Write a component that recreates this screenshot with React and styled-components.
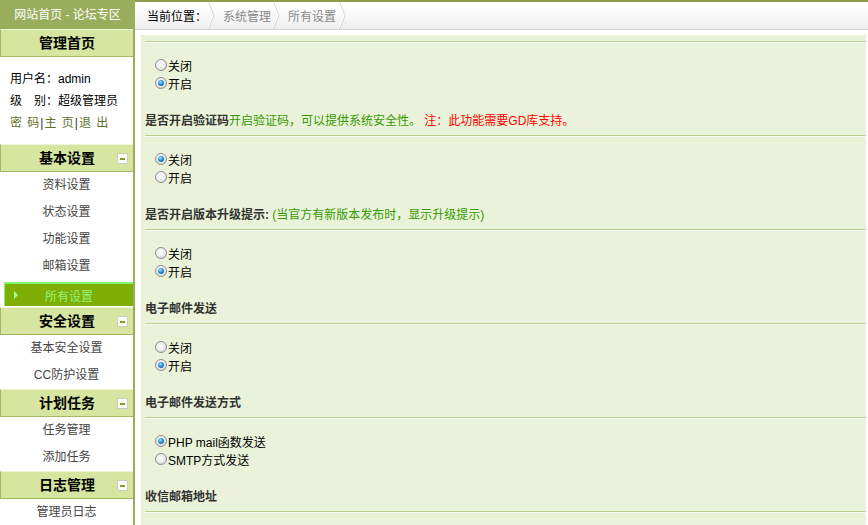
import React from "react";
import styled, { createGlobalStyle, css } from "styled-components";

const GlobalStyle = createGlobalStyle`
  html, body {
    margin: 0;
    padding: 0;
    height: 525px;
    overflow: hidden;
    background: #fff;
    font-family: "Liberation Sans", "Noto Sans CJK SC", sans-serif;
    font-size: 12px;
    color: #000;
  }
  * { box-sizing: border-box; }
`;

const olive = "#9aad5c";
const barBorder = "#a3b862";

const Page = styled.div`
  display: flex;
  width: 868px;
  height: 525px;
  overflow: hidden;
`;

/* ---------- left menu ---------- */
const Sidebar = styled.aside`
  width: 135px;
  flex: none;
  display: flex;
  flex-direction: column;
`;

const SiteTitle = styled.div`
  height: 29px;
  padding-top: 2px;
  line-height: 27px;
  background: ${olive};
  color: #fff;
  text-align: center;
  font-size: 12px;
`;

const MenuBody = styled.div`
  flex: 1;
  border-right: 2px solid ${olive};
  display: flex;
  flex-direction: column;
`;

const GroupBar = styled.div`
  position: relative;
  height: 28px;
  line-height: 26px;
  border-top: 1px solid #eef5d6;
  border-bottom: 1px solid ${barBorder};
  border-left: 1px solid ${barBorder};
  background: #d6e59f;
  text-align: center;
  font-weight: bold;
  font-size: 14px;
  color: #000;
  display: flex;
  align-items: center;
  justify-content: center;
`;

const Collapse = styled.span`
  position: absolute;
  right: 5px;
  top: 8px;
  width: 11px;
  height: 11px;
  background: #fbfbf6;
  border: 1px solid #c9cfb8;
  display: flex;
  align-items: center;
  justify-content: center;
  &::before {
    content: "";
    width: 5px;
    height: 2px;
    background: #849a35;
  }
`;

const UserInfo = styled.div`
  padding: 11px 0 10px 10px;
  line-height: 22px;
  color: #000;
`;

const UserLinks = styled.div`
  letter-spacing: 1px;
  color: #333;
  span { color: #5f6e2c; }
`;

const MenuItem = styled.div`
  height: 27px;
  line-height: 27px;
  text-align: center;
  color: #454545;
  font-size: 12px;
`;

const ActiveItem = styled.div`
  height: 27px;
  padding: 2px 0 1px 4px;
`;

const ActiveInner = styled.div`
  height: 100%;
  display: flex;
  align-items: center;
  border-top: 2px solid #84f56e;
  border-left: 1px solid #84f56e;
  background: #7fae04;
  color: #93f27a;
  padding-left: 9px;
  &::before {
    content: "";
    width: 0;
    height: 0;
    border-top: 4px solid transparent;
    border-bottom: 4px solid transparent;
    border-left: 4px solid #a6ff8e;
  }
  span {
    flex: 1;
    text-align: center;
    margin-right: 13px;
  }
`;

/* ---------- main area ---------- */
const Main = styled.main`
  flex: 1;
  display: flex;
  flex-direction: column;
  border-top: 2px solid #8c9f48;
  min-width: 0;
`;

const Crumbs = styled.nav`
  height: 28px;
  display: flex;
  align-items: center;
  padding-left: 12px;
  background: linear-gradient(#ffffff, #fbfbfb 40%, #ededed);
  border-bottom: 1px solid #d3d3d3;
  font-size: 12px;
`;

const CrumbLabel = styled.span`
  color: #000;
  width: 61px;
`;

const CrumbText = styled.span`
  color: #888;
  margin: 0 ${(p) => p.$after}px 0 8px;
`;

const Chevron = () => (
  <svg width="7" height="27" viewBox="0 0 7 27" style={{ flex: "none" }}>
    <polyline points="0.5,0 6,13.5 0.5,27" fill="none" stroke="#cfcfcf" strokeWidth="1" />
    <polyline points="-0.5,0 5,13.5 -0.5,27" fill="none" stroke="#ffffff" strokeWidth="1" />
  </svg>
);

const Frame = styled.div`
  flex: 1;
  padding: 5px 2px 0 6px;
  background: #fff;
  display: flex;
`;

const Panel = styled.section`
  flex: 1;
  background: #eaf3d9;
  padding: 6px 0 0 4px;
`;

const Rule = styled.div`
  height: 2px;
  border-top: 1px solid #bbcf93;
  border-bottom: 1px solid #fafdf3;
`;

const Options = styled.div`
  padding: 13px 0 16px 10px;
`;

const OptionRow = styled.label`
  display: flex;
  align-items: center;
  height: 18px;
  color: #000;
`;

const RadioMark = styled.span`
  width: 12px;
  height: 12px;
  margin-right: 1px;
  border-radius: 50%;
  border: 1px solid #8e8e8e;
  background: radial-gradient(circle at 45% 40%, #ffffff 0%, #ececec 50%, #c4c4c4 100%);
  display: inline-flex;
  align-items: center;
  justify-content: center;
  ${(p) =>
    p.$on &&
    css`
      &::after {
        content: "";
        width: 6px;
        height: 6px;
        border-radius: 50%;
        background: radial-gradient(circle at 40% 35%, #9fe0ff 0%, #2b8fd6 45%, #0a4485 100%);
      }
    `}
`;

const Title = styled.div`
  height: 27px;
  line-height: 27px;
  font-weight: bold;
  color: #333;
  white-space: nowrap;
`;

const Hint = styled.span`
  font-weight: normal;
  color: ${(p) => (p.$warn ? "#ff0000" : "#339900")};
`;

const blocks = [
  {
    options: ["关闭", "开启"],
    checked: 1,
    title: (
      <>
        是否开启验证码<Hint>开启验证码，可以提供系统安全性。</Hint>
        <Hint $warn> 注：此功能需要GD库支持。</Hint>
      </>
    ),
  },
  {
    options: ["关闭", "开启"],
    checked: 0,
    title: (
      <>
        是否开启版本升级提示: <Hint>(当官方有新版本发布时，显示升级提示)</Hint>
      </>
    ),
  },
  { options: ["关闭", "开启"], checked: 1, title: "电子邮件发送" },
  { options: ["关闭", "开启"], checked: 1, title: "电子邮件发送方式" },
  { options: ["PHP mail函数发送", "SMTP方式发送"], checked: 0, title: "收信邮箱地址" },
];

const menu = [
  { group: "基本设置", items: ["资料设置", "状态设置", "功能设置", "邮箱设置", "所有设置"], active: "所有设置" },
  { group: "安全设置", items: ["基本安全设置", "CC防护设置"] },
  { group: "计划任务", items: ["任务管理", "添加任务"] },
  { group: "日志管理", items: ["管理员日志"] },
];

export default function App() {
  return (
    <>
      <GlobalStyle />
      <Page>
        <Sidebar>
          <SiteTitle>网站首页 - 论坛专区</SiteTitle>
          <MenuBody>
            <GroupBar>管理首页</GroupBar>
            <UserInfo>
              <div>用户名：admin</div>
              <div>级　别：超级管理员</div>
              <UserLinks>
                <span>密 码</span>|<span>主 页</span>|<span>退 出</span>
              </UserLinks>
            </UserInfo>
            {menu.map((g) => (
              <React.Fragment key={g.group}>
                <GroupBar>
                  {g.group}
                  <Collapse />
                </GroupBar>
                {g.items.map((it) =>
                  it === g.active ? (
                    <ActiveItem key={it}>
                      <ActiveInner>
                        <span>{it}</span>
                      </ActiveInner>
                    </ActiveItem>
                  ) : (
                    <MenuItem key={it}>{it}</MenuItem>
                  )
                )}
              </React.Fragment>
            ))}
          </MenuBody>
        </Sidebar>
        <Main>
          <Crumbs>
            <CrumbLabel>当前位置：</CrumbLabel>
            <Chevron />
            <CrumbText $after={2}>系统管理</CrumbText>
            <Chevron />
            <CrumbText $after={3}>所有设置</CrumbText>
            <Chevron />
          </Crumbs>
          <Frame>
            <Panel>
              {blocks.map((b, i) => (
                <React.Fragment key={i}>
                  <Rule />
                  <Options>
                    {b.options.map((o, j) => (
                      <OptionRow key={o}>
                        <RadioMark $on={j === b.checked} />
                        {o}
                      </OptionRow>
                    ))}
                  </Options>
                  <Title>{b.title}</Title>
                </React.Fragment>
              ))}
              <Rule />
            </Panel>
          </Frame>
        </Main>
      </Page>
    </>
  );
}
